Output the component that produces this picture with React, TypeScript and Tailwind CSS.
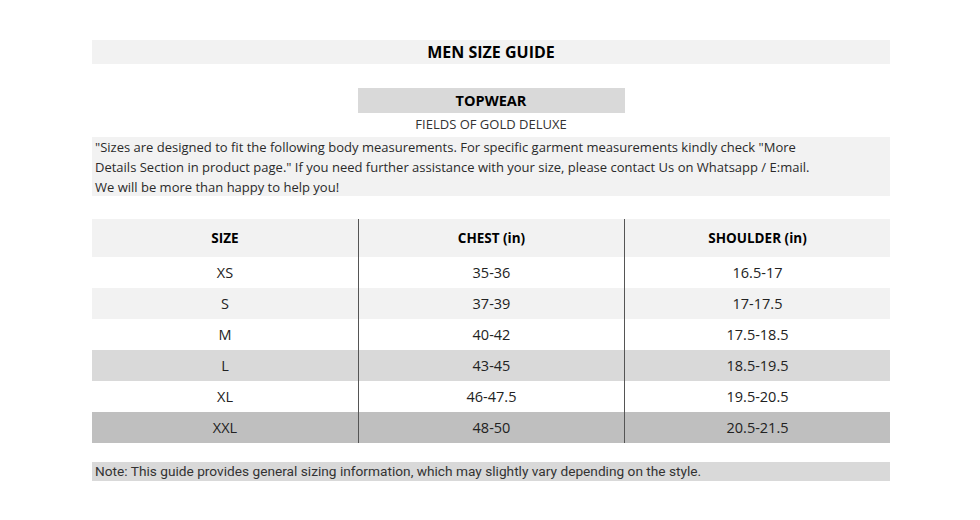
const rows = [
  { size: 'XS', chest: '35-36', shoulder: '16.5-17', bg: 'bg-white' },
  { size: 'S', chest: '37-39', shoulder: '17-17.5', bg: 'bg-[#f2f2f2]' },
  { size: 'M', chest: '40-42', shoulder: '17.5-18.5', bg: 'bg-white' },
  { size: 'L', chest: '43-45', shoulder: '18.5-19.5', bg: 'bg-[#d9d9d9]' },
  { size: 'XL', chest: '46-47.5', shoulder: '19.5-20.5', bg: 'bg-white' },
  { size: 'XXL', chest: '48-50', shoulder: '20.5-21.5', bg: 'bg-[#bfbfbf]' },
]

export default function App() {
  return (
    <div className="w-[980px] h-[520px] bg-white pt-10 pl-[92px] pr-[90px] font-['Open_Sans','Lato',sans-serif] text-[#222]">
      <div className="h-6 bg-[#f2f2f2] flex items-center justify-center text-[16px] font-bold text-black">
        MEN SIZE GUIDE
      </div>
      <div className="mt-6 flex justify-center">
        <div className="w-[267px] h-[25px] bg-[#d9d9d9] flex items-center justify-center text-[14.5px] font-bold text-black">
          TOPWEAR
        </div>
      </div>
      <div className="h-6 flex items-center justify-center text-[13px] text-[#333]">FIELDS OF GOLD DELUXE</div>
      <div className="bg-[#f2f2f2] h-[59px] pl-[3px] text-[13px] leading-[20px] text-[#2a2a2a]">
        <p>"Sizes are designed to fit the following body measurements. For specific garment measurements kindly check "More</p>
        <p>Details Section in product page." If you need further assistance with your size, please contact Us on Whatsapp / E:mail.</p>
        <p>We will be more than happy to help you!</p>
      </div>
      <div className="mt-[23px] grid grid-cols-3 text-[14.5px] text-[#222]">
        <div className="h-[38px] bg-[#f2f2f2] flex items-center justify-center font-bold text-black text-[13.5px]">SIZE</div>
        <div className="h-[38px] bg-[#f2f2f2] flex items-center justify-center font-bold text-black text-[13.5px] border-l border-[#555]">
          CHEST (in)
        </div>
        <div className="h-[38px] bg-[#f2f2f2] flex items-center justify-center font-bold text-black text-[13.5px] border-l border-[#555]">
          SHOULDER (in)
        </div>
        {rows.map((r) => (
          <div key={r.size} className="contents">
            <div className={`h-[31px] flex items-center justify-center ${r.bg}`}>{r.size}</div>
            <div className={`h-[31px] flex items-center justify-center border-l border-[#555] ${r.bg}`}>{r.chest}</div>
            <div className={`h-[31px] flex items-center justify-center border-l border-[#555] ${r.bg}`}>{r.shoulder}</div>
          </div>
        ))}
      </div>
      <div className="mt-[19px] h-[19px] bg-[#d9d9d9] pl-[3px] flex items-center text-[13.7px] text-[#333] font-['Roboto',sans-serif]">
        Note: This guide provides general sizing information, which may slightly vary depending on the style.
      </div>
    </div>
  )
}
